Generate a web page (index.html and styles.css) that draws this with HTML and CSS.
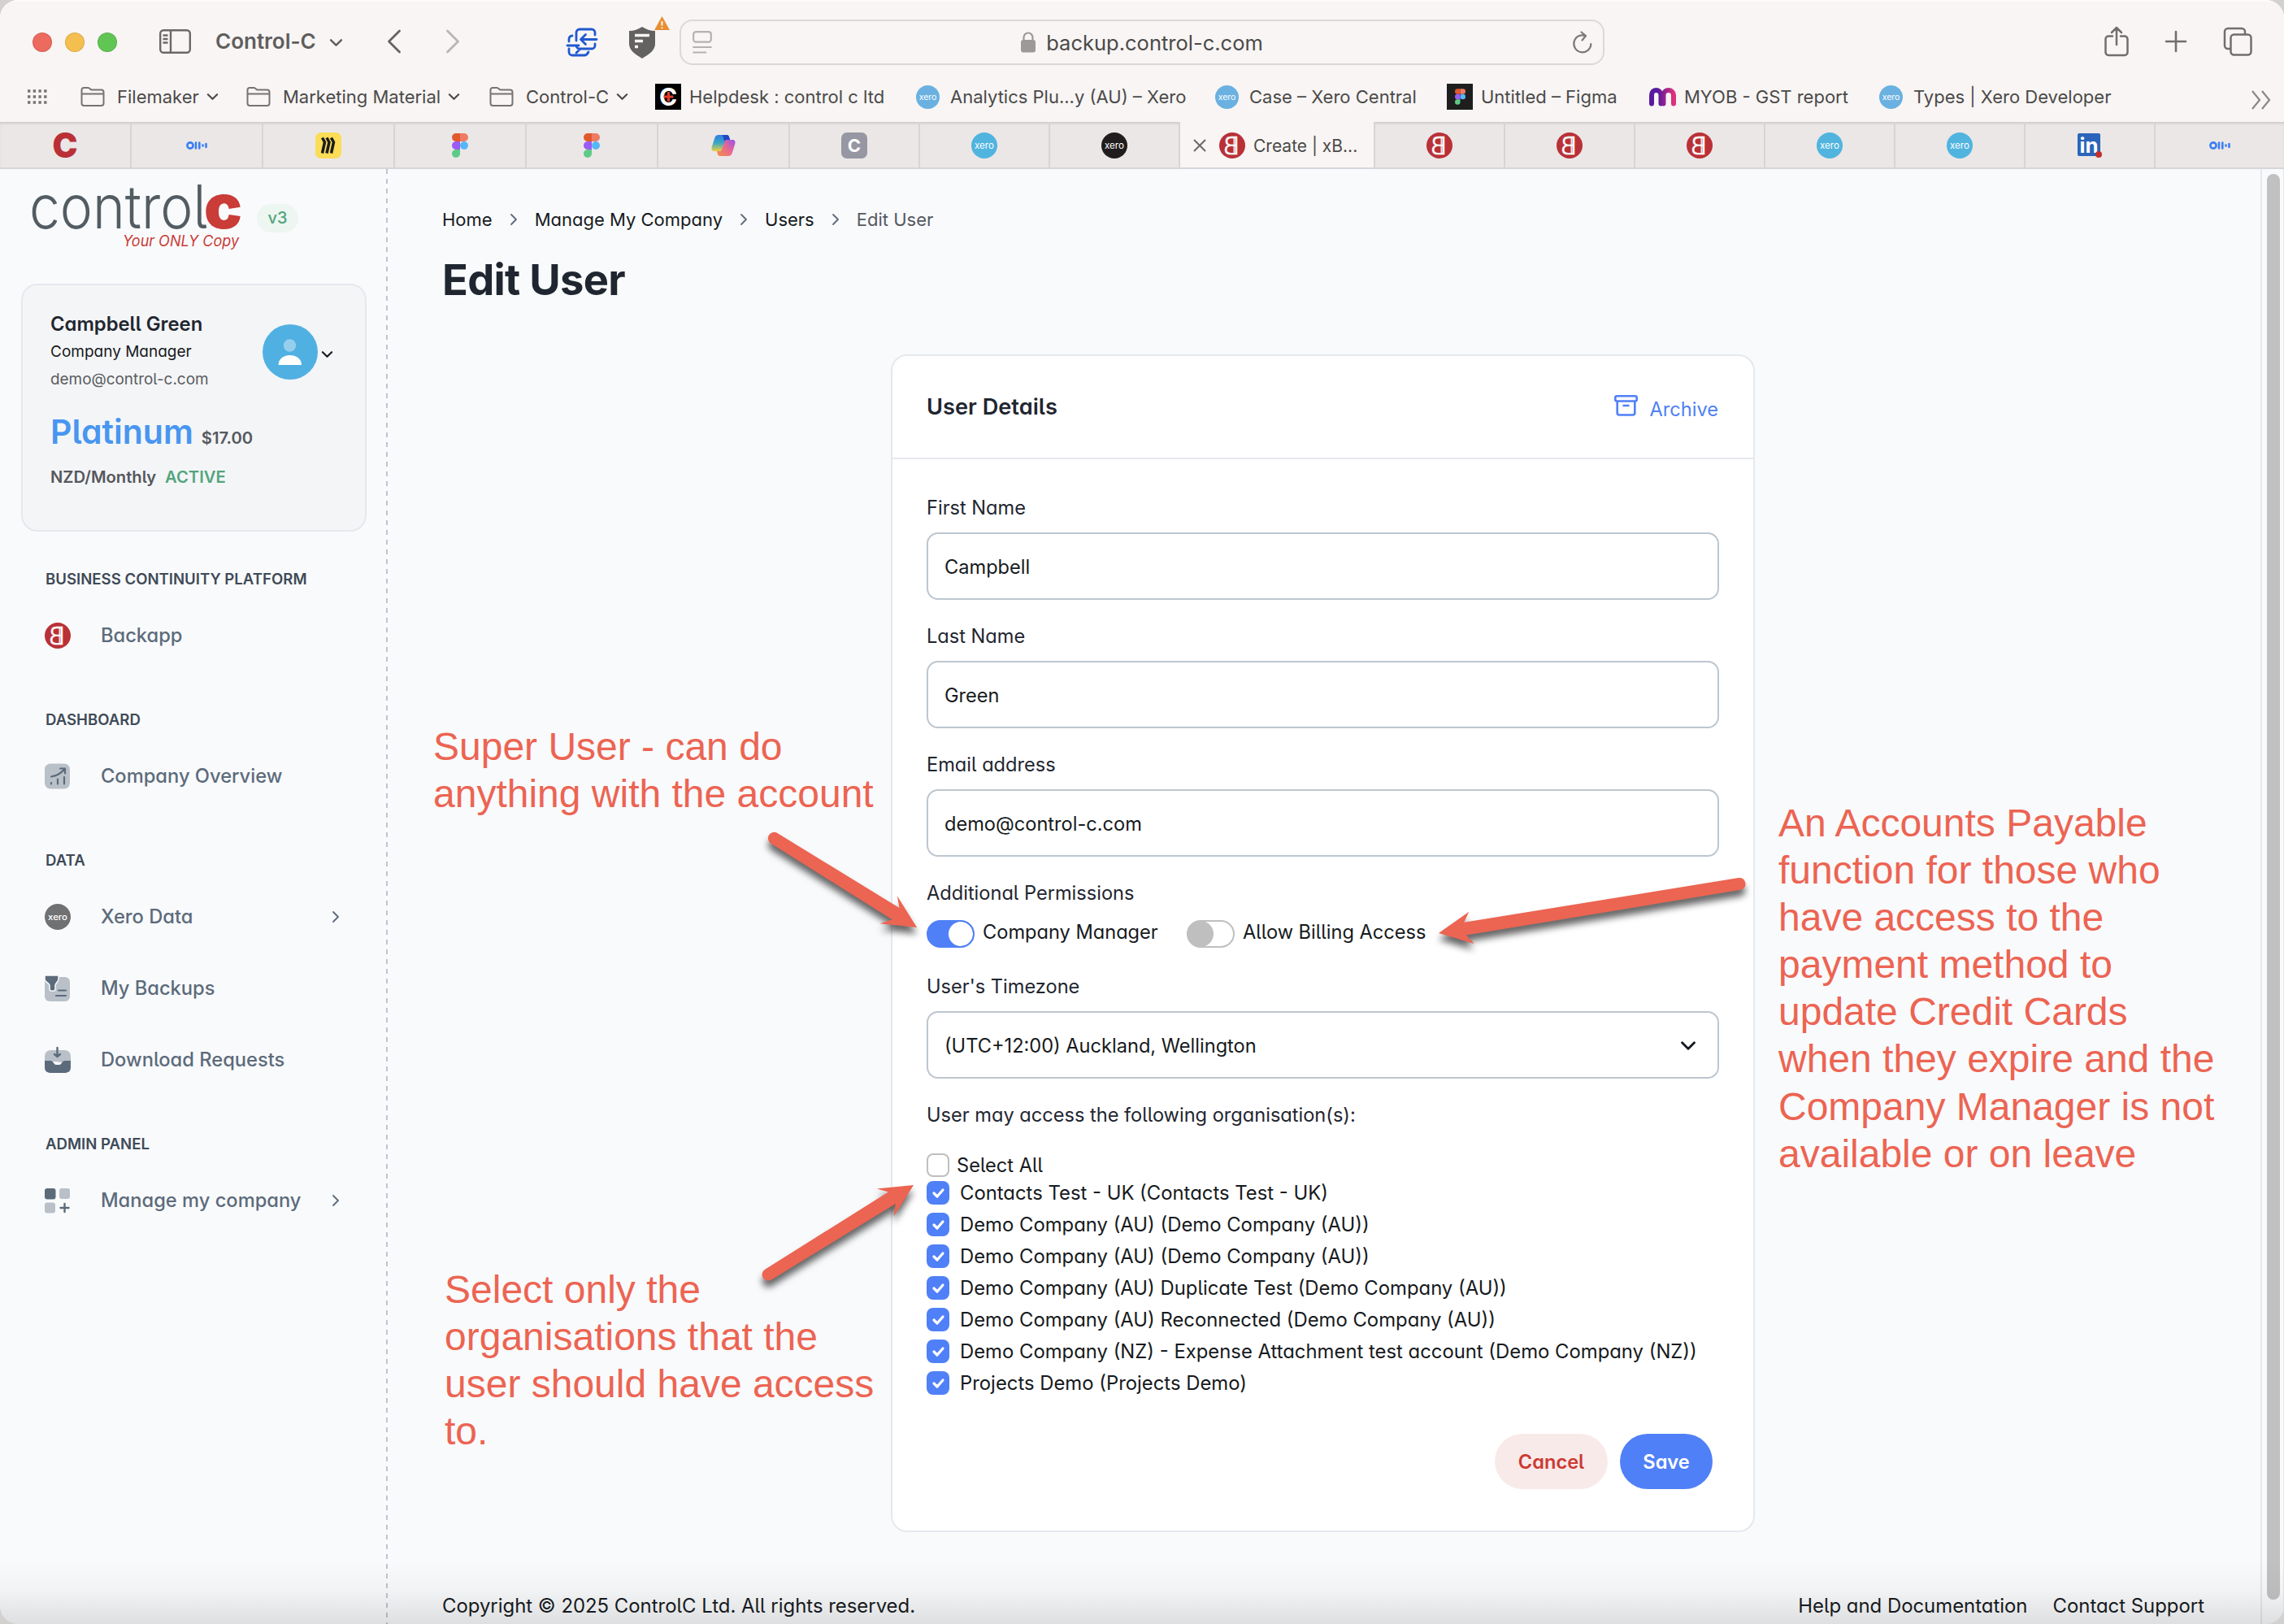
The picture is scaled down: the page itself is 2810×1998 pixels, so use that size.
FILE: index.html
```html
<!DOCTYPE html>
<html lang="en">
<head>
  <meta charset="UTF-8">
  <title>Edit User</title>
  <link rel="stylesheet" href="styles.css">
</head>
<body>
  <svg class="defs" width="0" height="0">
    <defs>
      <symbol id="folder" viewBox="0 0 30 24">
        <path d="M1.5 5V3.5a2.5 2.5 0 0 1 2.500-2.500h5.500c2 0 2.500 2.500 4.500 2.500h11.500a3 3 0 0 1 3 3v13.500a3 3 0 0 1-3 3H4.500a3 3 0 0 1-3-3zM1.500 8.500h27" fill="none" stroke="#757473" stroke-width="2"/>
      </symbol>
      <symbol id="down" viewBox="0 0 16 10">
        <path d="M2 2l6 6 6-6" fill="none" stroke="currentColor" stroke-width="2.300" stroke-linecap="round" stroke-linejoin="round"/>
      </symbol>
      <symbol id="right" viewBox="0 0 10 16">
        <path d="M2 2l6 6-6 6" fill="none" stroke="currentColor" stroke-width="1.800" stroke-linecap="round" stroke-linejoin="round"/>
      </symbol>
      <symbol id="xero" viewBox="0 0 32 32">
        <circle cx="16" cy="16" r="16" fill="currentColor"/>
        <text x="16" y="19.500" font-size="11" text-anchor="middle" textLength="24" lengthAdjust="spacingAndGlyphs" fill="#fff">xero</text>
      </symbol>
      <symbol id="backapp" viewBox="0 0 32 32">
        <circle cx="16" cy="16" r="16" fill="#b93137"/>
        <text x="-15" y="27" transform="scale(-1 1)" font-size="30" font-weight="300" text-anchor="middle" fill="#fff" stroke="#fff" stroke-width=".5">B</text>
        <path d="M18.200 6v20" stroke="#fff" stroke-width="1.300"/>
      </symbol>
      <symbol id="figma" viewBox="0 0 20 30">
        <path d="M10 0H5a5 5 0 0 0 0 10h5z" fill="#e1582d"/>
        <path d="M10 0h5a5 5 0 0 1 0 10h-5z" fill="#ee7b66"/>
        <path d="M10 10H5a5 5 0 0 0 0 10h5z" fill="#9a5cf5"/>
        <circle cx="15" cy="15" r="5" fill="#56b6fa"/>
        <path d="M10 20H5a5 5 0 1 0 5 5z" fill="#5fca86"/>
      </symbol>
      <symbol id="otter" viewBox="0 0 26 10">
        <g fill="none" stroke="#3b7ff5" stroke-width="2.600" stroke-linecap="round">
          <circle cx="5" cy="5" r="3.600"/>
          <path d="M12 1.500v7M16.300 1.500v7M20.500 4.500v1M24.500 3v4"/>
        </g>
      </symbol>
      <symbol id="tick" viewBox="0 0 28 28">
        <path d="M9 14.500l4 4 7-8" fill="none" stroke="#fff" stroke-width="3.200" stroke-linecap="round" stroke-linejoin="round"/>
      </symbol>
      <linearGradient id="myob" x1="0" x2="1"><stop offset=".3" stop-color="#5a1aa0"/><stop offset="1" stop-color="#e0317a"/></linearGradient>
      <linearGradient id="cop1" x1="0" y1="0" x2="0" y2="1"><stop offset="0" stop-color="#2f7de8"/><stop offset=".5" stop-color="#39a9c0"/><stop offset="1" stop-color="#f0cf40"/></linearGradient>
      <linearGradient id="cop2" x1="1" y1="0" x2="0" y2="1"><stop offset="0" stop-color="#9a50e8"/><stop offset=".5" stop-color="#ea6a90"/><stop offset="1" stop-color="#f09040"/></linearGradient>
    </defs>
  </svg>

  <div class="window">
    <div class="toolbar">
      <div class="lights"><i class="red"></i><i class="yellow"></i><i class="green"></i></div>
      <svg class="t-side" width="39" height="30" viewBox="0 0 39 30" fill="none" stroke="#6a6968" stroke-width="2.400"><rect x="1.200" y="1.200" width="36.600" height="27.600" rx="4"/><path d="M14 1v28M4.500 7.500h6M4.500 12h6M4.500 16.500h6"/></svg>
      <div class="profile-name">Control-C</div>
      <svg class="t-down" width="17" height="11"><use href="#down"/></svg>
      <svg class="t-back" width="18" height="30" viewBox="0 0 18 30" fill="none" stroke="#656463" stroke-width="2.800" stroke-linecap="round" stroke-linejoin="round"><path d="M15.500 2L2.500 15l13 13"/></svg>
      <svg class="t-fwd" width="18" height="30" viewBox="0 0 18 30" fill="none" stroke="#b8b5b4" stroke-width="2.800" stroke-linecap="round" stroke-linejoin="round"><path d="M2.500 2l13 13-13 13"/></svg>
      <svg class="t-ext" width="38" height="36" viewBox="0 0 38 36" fill="none" stroke="#2158d0" stroke-width="2.800" stroke-linecap="round" stroke-linejoin="round"><path d="M12 16V6a4 4 0 0 1 4-4h15a4 4 0 0 1 4 4v3M35 20v2a4 4 0 0 1-4 4H16a4 4 0 0 1-4-4M37 14.500H18M23.500 8.500l-6 6 6 6M7 10c-2.500 0-4 2-4 4v3M1 22h14M3 26v4a4 4 0 0 0 4 4h15c3 0 4-2 5-4M12 31l5-5"/></svg>
      <svg class="t-shield" width="50" height="52" viewBox="0 0 50 52"><path d="M0 18c6 0 11-2 16-5 5 3 10 5 16 5v16c0 8-8 13-16 18C8 47 0 42 0 34z" fill="#636261"/><path d="M7 23.500h18M7 30.500h10M7 37.500h4" stroke="#f8f5f4" stroke-width="3.600"/><path d="M40.500 0l9.500 17H31z" fill="#e78f35"/><path d="M40.500 6v5.500M40.500 13.500v1.500" stroke="#fff" stroke-width="1.800"/></svg>
      <div class="url">
        <svg width="24" height="28" viewBox="0 0 24 28" fill="none" stroke="#b4b1b0" stroke-width="2.200" stroke-linecap="round"><rect x="1.200" y="1.200" width="21.600" height="12.500" rx="3"/><path d="M1.200 20h21.600M1.200 26.500h15"/></svg>
        <div class="address">
          <svg width="18" height="26" viewBox="0 0 18 26"><rect y="10" width="18" height="15.500" rx="3" fill="#9c9a99"/><path d="M3.500 11V7a5.500 5.500 0 0 1 11 0v4" fill="none" stroke="#9c9a99" stroke-width="2.200"/></svg>
          <span>backup.control-c.com</span>
        </div>
        <svg width="24" height="28" viewBox="0 0 24 28" fill="none" stroke="#7b7978" stroke-width="2.200" stroke-linecap="round" stroke-linejoin="round"><path d="M16 6.200A10.500 10.500 0 1 0 22.300 16M10.500 1.500L16 6l-4.500 5.500"/></svg>
      </div>
      <svg class="t-share" width="30" height="38" viewBox="0 0 30 38" fill="none" stroke="#706f6e" stroke-width="2.500" stroke-linecap="round" stroke-linejoin="round"><path d="M10 12.500H5a3.500 3.500 0 0 0-3.500 3.500v16.500A3.500 3.500 0 0 0 5 36h20a3.500 3.500 0 0 0 3.500-3.500V16a3.500 3.500 0 0 0-3.500-3.500h-5M15 23V2M9 8l6-6 6 6"/></svg>
      <svg class="t-plus" width="28" height="28" viewBox="0 0 28 28" stroke="#706f6e" stroke-width="2.600" stroke-linecap="round"><path d="M14 2v24M2 14h24"/></svg>
      <svg class="t-tabs" width="36" height="36" viewBox="0 0 36 36" fill="none" stroke="#706f6e" stroke-width="2.500"><rect x="9.500" y="9.500" width="25" height="25" rx="4"/><path d="M9 27H6a4 4 0 0 1-4-4V6a4 4 0 0 1 4-4h17a4 4 0 0 1 4 4v3"/></svg>
    </div>

    <div class="bookmarks">
      <div><svg width="24" height="18" viewBox="0 0 24 18"><path d="M0 2h24M0 9h24M0 16h24" stroke="#757473" stroke-width="3.400" stroke-dasharray="3.400 3.300"/></svg></div>
      <div class="dir"><svg width="30" height="24"><use href="#folder"/></svg><span>Filemaker</span><svg width="15" height="10"><use href="#down"/></svg></div>
      <div class="dir"><svg width="30" height="24"><use href="#folder"/></svg><span>Marketing Material</span><svg width="15" height="10"><use href="#down"/></svg></div>
      <div class="dir"><svg width="30" height="24"><use href="#folder"/></svg><span>Control-C</span><svg width="15" height="10"><use href="#down"/></svg></div>
      <div class="wide"><svg width="32" height="32" viewBox="0 0 32 32"><path d="M0 0h32v32H0z"/><text x="16" y="27" font-size="30" font-weight="700" text-anchor="middle" fill="#fff">C</text><path d="M16.500 10v12M10.500 16h12" stroke="#e23a2a" stroke-width="3"/></svg><span>Helpdesk : control c ltd</span></div>
      <div><svg class="sky" width="29" height="29"><use href="#xero"/></svg><span>Analytics Plu...y (AU) – Xero</span></div>
      <div><svg class="sky" width="29" height="29"><use href="#xero"/></svg><span>Case – Xero Central</span></div>
      <div class="wide"><svg width="32" height="32" viewBox="0 0 32 32"><path d="M0 0h32v32H0z" fill="#1e1e1e"/><svg x="10" y="6" width="13" height="20"><use href="#figma"/></svg></svg><span>Untitled – Figma</span></div>
      <div class="wide"><svg width="33" height="24" viewBox="0 0 33 24" fill="none" stroke="url(#myob)" stroke-width="6" stroke-linecap="round"><path d="M3 20.500V10c0-8 11-8 11.500 0v10.500M17.500 20.500V10c.500-8 12-8 12.500 0v10.500"/></svg><span>MYOB - GST report</span></div>
      <div><svg class="sky" width="29" height="29"><use href="#xero"/></svg><span>Types | Xero Developer</span></div>
      <div><svg class="more" width="25" height="24" viewBox="0 0 25 24" fill="none" stroke="#8a8887" stroke-width="2.200"><path d="M2 1l9 11-9 11M14 1l9 11-9 11"/></svg></div>
    </div>

    <div class="tabs">
      <div><svg width="44" height="44" viewBox="0 0 44 44"><text x="22" y="37" font-size="42" font-weight="900" text-anchor="middle" textLength="31" lengthAdjust="spacingAndGlyphs" fill="#b93137">C</text></svg></div>
      <div><svg width="26" height="10"><use href="#otter"/></svg></div>
      <div><svg width="32" height="32" viewBox="0 0 32 32"><rect width="32" height="32" rx="7" fill="#fbdd57"/><path d="M8.500 6.500L11.500 12l-3 13.500M14 6.500l3 5.500-3 13.500M19.500 6.500l3 5.500-3 13.500" fill="none" stroke="#1c1c1e" stroke-width="3.500"/></svg></div>
      <div><svg width="20" height="30"><use href="#figma"/></svg></div>
      <div><svg width="20" height="30"><use href="#figma"/></svg></div>
      <div><svg width="30" height="28" viewBox="0 0 30 28"><path d="M9 1h10c2 0 3 1.500 3.500 4l.500 2h-3c-2 0-3 1-3.500 3L14 18c-.500 2-2 3-4 3H4c-3 0-4-2-3.300-5L4.500 4C5.200 2 7 1 9 1z" fill="url(#cop1)"/><path d="M21 27H11c-2 0-3-1.500-3.500-4L7 21h3c2 0 3-1 3.500-3L16 10c.500-2 2-3 4-3h6c3 0 4 2 3.300 5L25.500 24c-.700 2-2.500 3-4.500 3z" fill="url(#cop2)"/><path d="M14 1h5c2 0 3 1.500 3.500 4l.500 2h-4c-1.500 0-2.500 1-3 2z" fill="#2348c5"/></svg></div>
      <div><svg width="32" height="32" viewBox="0 0 32 32"><rect width="32" height="32" rx="7" fill="#9697a3"/><text x="16" y="24" font-size="22" font-weight="700" text-anchor="middle" fill="#fff">C</text></svg></div>
      <div><svg class="blue" width="32" height="32"><use href="#xero"/></svg></div>
      <div><svg class="black" width="32" height="32"><use href="#xero"/></svg></div>
      <div class="current">
        <svg width="16" height="16" viewBox="0 0 16 16" stroke="#6a6968" stroke-width="2"><path d="M1 1l14 14M15 1L1 15"/></svg>
        <svg class="fav" width="32" height="32"><use href="#backapp"/></svg>
        <span>Create | xB...</span>
      </div>
      <div><svg width="32" height="32"><use href="#backapp"/></svg></div>
      <div><svg width="32" height="32"><use href="#backapp"/></svg></div>
      <div><svg width="32" height="32"><use href="#backapp"/></svg></div>
      <div><svg class="blue" width="32" height="32"><use href="#xero"/></svg></div>
      <div><svg class="blue" width="32" height="32"><use href="#xero"/></svg></div>
      <div><svg width="30" height="30" viewBox="0 0 30 30"><rect width="28" height="28" rx="2" fill="#2b65bb"/><text x="14" y="23.500" font-size="25" font-weight="700" text-anchor="middle" textLength="23" lengthAdjust="spacingAndGlyphs" fill="#fff">in</text><circle cx="26" cy="26" r="4" fill="#c0302b"/></svg></div>
      <div><svg width="26" height="10"><use href="#otter"/></svg></div>
    </div>

    <div class="page">
      <div class="sidebar">
        <div class="brand">
          <svg width="256" height="86" viewBox="0 0 256 86">
            <text x="-5" y="58" font-size="74" font-weight="300" textLength="219" lengthAdjust="spacingAndGlyphs" fill="#525c63">control</text>
            <text x="210" y="58" font-size="76" font-weight="900" textLength="47" lengthAdjust="spacingAndGlyphs" fill="#c93c37">c</text>
            <text x="110" y="80" font-size="18.500" font-style="italic" textLength="143" lengthAdjust="spacingAndGlyphs" fill="#c93c37">Your ONLY Copy</text>
          </svg>
          <span class="version">v3</span>
        </div>

        <div class="account">
          <div class="who">
            <div class="name">Campbell Green</div>
            <div class="role">Company Manager</div>
            <div class="mail">demo@control-c.com</div>
          </div>
          <svg class="avatar" width="68" height="68" viewBox="0 0 68 68"><circle cx="34" cy="34" r="34" fill="#50b0e2"/><circle cx="33.500" cy="26" r="7.700" fill="#96cfed"/><path d="M19.500 50c0-16 28.500-16 28.500 0z" fill="#fff"/></svg>
          <svg class="caret" width="15" height="10"><use href="#down"/></svg>
          <div class="plan"><b>Platinum</b><span>$17.00</span></div>
          <div class="billing"><span>NZD/Monthly</span><em>ACTIVE</em></div>
        </div>

        <div class="group">
          <h4>BUSINESS CONTINUITY PLATFORM</h4>
          <a><svg width="32" height="32"><use href="#backapp"/></svg><span>Backapp</span></a>
        </div>
        <div class="group">
          <h4>DASHBOARD</h4>
          <a><svg width="32" height="32" viewBox="0 0 32 32"><rect x="0" y=".5" width="31" height="31" rx="7" fill="#b9c0c8"/><path d="M8 16.500c7-1 11-3 16-9M19 6.500h6v6M8 24v1.500M16 19.500v6M24 17v8.500" fill="none" stroke="#5c6b7b" stroke-width="2.200" stroke-linecap="round"/></svg><span>Company Overview</span></a>
        </div>
        <div class="group">
          <h4>DATA</h4>
          <a><svg class="gray" width="32" height="32"><use href="#xero"/></svg><span>Xero Data</span><svg class="go" width="10" height="16"><use href="#right"/></svg></a>
          <a><svg width="32" height="32" viewBox="0 0 32 32"><rect x="0" y="2" width="31" height="30" rx="6" fill="#b9c0c8"/><path d="M0 0h17v5c0 2-4 5-4 7v5c0 3-7 3-7 0v-5c0-2-6-4-6-7z" fill="#5c6b7b" stroke="#f9fafc" stroke-width="1.500"/><path d="M17 18.500h9M14 25h12" stroke="#5c6b7b" stroke-width="2.200" stroke-linecap="round"/></svg><span>My Backups</span></a>
          <a><svg width="32" height="32" viewBox="0 0 32 32"><path d="M0 17v-5c0-5 3-8 8-8h16c5 0 8 3 8 8v8z" fill="#b9c0c8"/><path d="M0 17h7c4 0 4 5 7 5h4c3 0 3-5 7-5h7v8c0 5-3 7-8 7H8c-5 0-8-2-8-7z" fill="#5c6b7b"/><path d="M15.500 1v10M12 9l3.500 3 3.500-3" fill="none" stroke="#5c6b7b" stroke-width="2.400" stroke-linecap="round"/></svg><span>Download Requests</span></a>
        </div>
        <div class="group">
          <h4>ADMIN PANEL</h4>
          <a><svg width="32" height="32" viewBox="0 0 32 32"><rect y="1" width="13.500" height="13.500" rx="3" fill="#5c6b7b"/><rect x="18" y="1" width="13" height="13" rx="3" fill="#b9c0c8"/><rect y="18.500" width="13" height="13" rx="3" fill="#b9c0c8"/><path d="M24.500 20v10M19.500 25h10" stroke="#5c6b7b" stroke-width="2.400" stroke-linecap="round"/></svg><span>Manage my company</span><svg class="go" width="10" height="16"><use href="#right"/></svg></a>
        </div>
      </div>

      <div class="main">
        <div class="crumbs">
          <span>Home</span><svg width="10" height="16"><use href="#right"/></svg>
          <span>Manage My Company</span><svg width="10" height="16"><use href="#right"/></svg>
          <span>Users</span><svg width="10" height="16"><use href="#right"/></svg>
          <span class="here">Edit User</span>
        </div>
        <h1>Edit User</h1>

        <div class="card">
          <div class="card-head">
            <h2>User Details</h2>
            <a class="archive"><svg width="29" height="26" viewBox="0 0 29 26" fill="none" stroke="#5080f7" stroke-width="2.600" stroke-linejoin="round"><rect x="1.300" y="1.300" width="26.400" height="6.200" rx="2"/><path d="M3.700 7.500V22a2.500 2.500 0 0 0 2.500 2.500h16.600a2.500 2.500 0 0 0 2.500-2.500V7.500M10.500 13h8"/></svg><span>Archive</span></a>
          </div>
          <div class="card-body">
            <label>First Name</label>
            <div class="input">Campbell</div>
            <label>Last Name</label>
            <div class="input">Green</div>
            <label>Email address</label>
            <div class="input">demo@control-c.com</div>
            <label>Additional Permissions</label>
            <div class="switches">
              <i class="switch on"></i><span>Company Manager</span>
              <i class="switch"></i><span>Allow Billing Access</span>
            </div>
            <label>User's Timezone</label>
            <div class="input select"><span>(UTC+12:00) Auckland, Wellington</span><svg width="20" height="13"><use href="#down"/></svg></div>
            <label>User may access the following organisation(s):</label>
            <div class="all"><i class="box"></i><span>Select All</span></div>
            <ul class="orgs">
              <li><svg><use href="#tick"/></svg>Contacts Test - UK (Contacts Test - UK)</li>
              <li><svg><use href="#tick"/></svg>Demo Company (AU) (Demo Company (AU))</li>
              <li><svg><use href="#tick"/></svg>Demo Company (AU) (Demo Company (AU))</li>
              <li><svg><use href="#tick"/></svg>Demo Company (AU) Duplicate Test (Demo Company (AU))</li>
              <li><svg><use href="#tick"/></svg>Demo Company (AU) Reconnected (Demo Company (AU))</li>
              <li><svg><use href="#tick"/></svg>Demo Company (NZ) - Expense Attachment test account (Demo Company (NZ))</li>
              <li><svg><use href="#tick"/></svg>Projects Demo (Projects Demo)</li>
            </ul>
            <div class="actions">
              <a class="btn cancel">Cancel</a>
              <a class="btn save">Save</a>
            </div>
          </div>
        </div>

        <div class="footer">
          <span>Copyright © 2025 ControlC Ltd. All rights reserved.</span>
          <span class="links"><a>Help and Documentation</a><a>Contact Support</a></span>
        </div>
      </div>

      <div class="scroll"><i></i></div>
    </div>
    <div class="fade"></div>
  </div>

  <!-- notes and arrows drawn over the window -->
  <div class="notes">
    <svg width="2810" height="1998" viewBox="0 0 2810 1998">
      <g fill="#ec6452" class="arrows">
        <g><path transform="translate(1128 1141) rotate(32)" d="M0 0L-41-20-31-9-207-7.500a7.500 7.500 0 0 0 0 15L-31 8l-10 12z"/></g>
        <g><path transform="translate(1770 1148) rotate(170.700)" d="M0 0L-41-20-33-8-375-7.500a7.500 7.500 0 0 0 0 15L-33 8l-8 12z"/></g>
        <g><path transform="translate(1124 1458) rotate(-31.600)" d="M0 0L-41-20-31-9-210-7.500a7.500 7.500 0 0 0 0 15L-31 8l-10 12z"/></g>
      </g>
    </svg>
    <p class="n1">Super User - can do<br>anything with the account</p>
    <p class="n2">An Accounts Payable<br>function for those who<br>have access to the<br>payment method to<br>update Credit Cards<br>when they expire and the<br>Company Manager is not<br>available or on leave</p>
    <p class="n3">Select only the<br>organisations that the<br>user should have access<br>to.</p>
  </div>
</body>
</html>
```

FILE: styles.css
```css
* {
  padding: 0;
  margin: 0;
  box-sizing: border-box;
}
body {
  width: 2810px;
  height: 1998px;
  overflow: hidden;
  background: #d3d1d0;
  font-family: Inter, "Liberation Sans", sans-serif;
  color: #161a20;
}
i, em {
  font-style: normal;
}
svg {
  display: block;
  flex: none;
  overflow: visible;
}
span, a, b, em {
  white-space: nowrap;
}
.defs {
  position: absolute;
}
.window {
  position: relative;
  display: flex;
  flex-direction: column;
  height: 1998px;
  border-radius: 22px;
  background: #f9fafc;
  overflow: hidden;
}

/* browser toolbar */
.toolbar {
  display: flex;
  align-items: center;
  height: 102px;
  padding-left: 40px;
  background: #f8f5f4;
  border-top: 2px solid #fdfcfb;
  color: #5f5e5d;
}
.lights {
  display: flex;
  gap: 16px;
}
.lights i {
  width: 24px;
  height: 24px;
  border-radius: 50%;
  border: 1px solid rgba(0, 0, 0, .1);
}
.red { background: #ec6a5e; }
.yellow { background: #f4bf4f; }
.green { background: #61c554; }
.t-side { margin: 0 0 3px 52px; }
.profile-name {
  width: 125px;
  margin: -4px 15px 0 30px;
  font-size: 26px;
  font-weight: 600;
  white-space: nowrap;
}
.t-back { margin: 0 0 3px 54px; }
.t-fwd { margin: 0 0 3px 54px; }
.t-ext { margin: 0 0 1px 131px; }
.t-shield { margin: -13px 0 0 39px; }
.url {
  display: flex;
  align-items: center;
  justify-content: space-between;
  width: 1138px;
  height: 56px;
  margin-left: 12px;
  padding: 0 13px 0 14px;
  border: 2px solid #dcd8d7;
  border-radius: 16px;
  color: #4b4a49;
  font-size: 25.5px;
}
.address {
  display: flex;
  align-items: center;
  gap: 13px;
  margin-right: 1px;
}
.t-share { margin: 0 0 3px 615px; }
.t-plus { margin: 0 0 3px 44px; }
.t-tabs { margin: 0 0 3px 44px; }

.bookmarks {
  display: grid;
  grid-template-columns: 65px 204px 299px 204px 321px 368px 285px 249px 283px 457px 25px;
  height: 48px;
  padding: 0 0 14px 34px;
  background: #f8f5f4;
  color: #4b4a49;
  font-size: 22px;
}
.bookmarks div {
  display: flex;
  align-items: center;
  gap: 13px;
}
.bookmarks .dir { gap: 16px; }
.bookmarks .dir svg + span {
  margin: 0 -7px 0 -1px;
}
.bookmarks .wide { gap: 10px; }
.sky { color: #6ab1e1; }
.blue { color: #50b4df; }
.black { color: #211d1e; }
.gray { color: #707172; }
.more { margin-top: 8px; }

.tabs {
  display: grid;
  grid-template-columns: repeat(5, 162px) 162px repeat(3, 160px) 240px repeat(6, 160px) 1fr;
  height: 58px;
  background: #ebe7e6;
  border-bottom: 2px solid #d5d6da;
  box-shadow: inset 0 3px 3px -1px #cdcac9;
}
.tabs div {
  display: flex;
  align-items: center;
  justify-content: center;
  padding-top: 2px;
  border-right: 2px solid #d8d4d3;
}
.tabs div:last-child { border: 0; }
.tabs .current {
  justify-content: flex-start;
  padding-left: 16px;
  background: #f8f5f4;
  color: #4b4a49;
  font-size: 21px;
}
.fav { margin: 0 10px 0 16px; }

/* page */
.page {
  display: flex;
  flex: 1;
  min-height: 0;
  font-feature-settings: "cv05", "cv11";
}
.sidebar {
  width: 477px;
  padding: 15px 26px 0 26px;
  background: repeating-linear-gradient(#bfc6cf 0 6px, transparent 6px 12px) right 0 top 0 / 2px 100% no-repeat;
}
.brand {
  display: flex;
  align-items: center;
  gap: 19px;
  height: 86px;
  padding-left: 15px;
}
.version {
  width: 51px;
  margin-top: 4px;
  border-radius: 18px;
  background: #edf6f1;
  color: #54a57e;
  font-size: 20px;
  font-weight: 500;
  line-height: 35px;
  text-align: center;
}
.account {
  display: grid;
  grid-template-columns: 261px 68px 1fr;
  align-items: center;
  align-content: start;
  height: 305px;
  margin: 40px 0 31px;
  padding: 29px 0 0 34px;
  border: 2px solid #e6e8ee;
  border-radius: 20px;
  background: #f4f5f7;
}
.name {
  font-size: 23.8px;
  font-weight: 600;
  line-height: 38px;
  color: #1f2630;
}
.role {
  font-size: 19px;
  line-height: 29px;
}
.mail {
  font-size: 18.9px;
  line-height: 39px;
  color: #595c60;
}
.avatar { margin: 0 0 0 0; }
.caret { margin: 5px 0 0 4px; }
.plan {
  grid-column: 1 / 4;
  display: flex;
  align-items: baseline;
  gap: 10px;
  height: 60px;
  margin-top: 15px;
  line-height: 60px;
  font-size: 20.2px;
  font-weight: 600;
  color: #55585d;
}
.plan b {
  font-size: 41px;
  font-weight: 600;
  color: #4896f0;
}
.billing {
  grid-column: 1 / 4;
  display: flex;
  gap: 11px;
  margin-top: 1px;
  line-height: 50px;
  font-size: 20.2px;
  font-weight: 600;
  color: #55585d;
}
.billing em { color: #54a57e; }
.group {
  margin-bottom: 31px;
  color: #5c6b7b;
}
.group h4 {
  padding-left: 30px;
  font-size: 18.6px;
  font-weight: 600;
  line-height: 54px;
  color: #3e4a57;
}
.group a {
  display: flex;
  align-items: center;
  height: 88px;
  padding: 0 33px 3px 29px;
  font-size: 23.7px;
  font-weight: 500;
}
.group a span { margin-left: 37px; }
.go { margin-left: auto; }

.main {
  display: flex;
  flex-direction: column;
  width: 2304px;
  padding: 44px 69px 0 67px;
}
.crumbs {
  display: flex;
  align-items: center;
  gap: 21px;
  height: 36px;
  font-size: 22px;
}
.crumbs svg { color: #5c6b7b; }
.here { color: #55595f; }
h1 {
  margin-top: 22px;
  font-size: 52.5px;
  font-weight: 700;
  line-height: 68px;
  letter-spacing: -.7px;
  color: #1f2630;
}
.card {
  width: 1063px;
  height: 1449px;
  margin: 58px 0 0 552px;
  border: 2px solid #e6e8ee;
  border-radius: 20px;
  background: #fff;
}
.card-head {
  display: flex;
  align-items: center;
  justify-content: space-between;
  height: 127px;
  padding: 0 43px 0 42px;
  border-bottom: 2px solid #e6e8ee;
}
h2 {
  font-size: 27.2px;
  font-weight: 600;
  color: #1f2630;
}
.archive {
  display: flex;
  align-items: center;
  gap: 15px;
  font-size: 23.6px;
  color: #5080f7;
}
.archive svg { margin-bottom: 4px; }
.archive span { margin-top: 5px; }
.card-body {
  padding: 42px 42px 0;
  font-size: 23.6px;
}
label {
  display: block;
  line-height: 36px;
  color: #1f2630;
}
.input {
  height: 83px;
  margin: 12px 0 27px;
  padding: 1px 20px 0;
  border: 2px solid #bdc6cf;
  border-radius: 14px;
  line-height: 79px;
  font-feature-settings: normal;
}
.select {
  display: flex;
  align-items: center;
  justify-content: space-between;
  padding-right: 26px;
}
.switches {
  display: flex;
  align-items: center;
  height: 34px;
  margin: 15px 0 30px;
}
.switches span {
  width: 251px;
  margin: -5px 0 0 10px;
}
.switch {
  flex: none;
  width: 59px;
  height: 34px;
  border: 2px solid #bfbfbf;
  border-radius: 17px;
  background: radial-gradient(circle at 15px 15px, #bfbfbf 15.5px, #fff 16.5px);
}
.switch.on {
  border-color: #5080f7;
  background: radial-gradient(circle at 40px 15px, #fff 14.5px, #5080f7 15.5px);
}
.all {
  display: flex;
  align-items: center;
  gap: 9px;
  height: 29px;
  margin-top: 29px;
}
.box {
  width: 28px;
  height: 29px;
  border: 2px solid #bfbfbf;
  border-radius: 8px;
}
.orgs {
  list-style: none;
  font-size: 23.85px;
}
.orgs li {
  display: flex;
  align-items: center;
  height: 39px;
  white-space: nowrap;
}
.orgs svg {
  width: 28px;
  height: 29px;
  margin-right: 13px;
  border-radius: 8px;
  background: #5080f7;
}
.actions {
  display: flex;
  justify-content: flex-end;
  gap: 15px;
  margin: 43px 8px 0;
}
.btn {
  border-radius: 34px;
  line-height: 69px;
  height: 68px;
  font-weight: 600;
  text-align: center;
}
.cancel {
  width: 139px;
  background: #f9eaea;
  color: #cc3a33;
}
.save {
  width: 114px;
  background: #5080f7;
  color: #fff;
}
.footer {
  position: relative;
  z-index: 2;
  display: flex;
  justify-content: space-between;
  margin-top: 75px;
  line-height: 32px;
  font-size: 23.9px;
}
.links {
  display: flex;
  gap: 31px;
}
.scroll {
  width: 29px;
  padding: 6px 0 0 6px;
  border-left: 2px solid #e6e7ea;
  border-right: 1px solid #e6e7ea;
}
.scroll i {
  display: block;
  width: 16px;
  height: 1754px;
  border-radius: 8px;
  background: #c1c1c1;
}
.fade {
  position: absolute;
  left: 0;
  right: 0;
  bottom: 0;
  height: 80px;
  background: linear-gradient(rgba(0, 0, 0, 0), rgba(0, 0, 0, .03) 50%, rgba(0, 0, 0, .11));
}

/* notes */
.notes {
  position: absolute;
  top: 0;
  left: 0;
  z-index: 5;
  font: 48px/58.1px "Liberation Sans", Arial, sans-serif;
  color: #ec6452;
  white-space: nowrap;
}
.notes p { position: absolute; }
.arrows g { filter: drop-shadow(0 8px 4px rgba(0, 0, 0, .6)); }
.n1 { left: 533px; top: 890px; }
.n2 { left: 2188px; top: 984px; }
.n3 { left: 547px; top: 1558px; }
```
